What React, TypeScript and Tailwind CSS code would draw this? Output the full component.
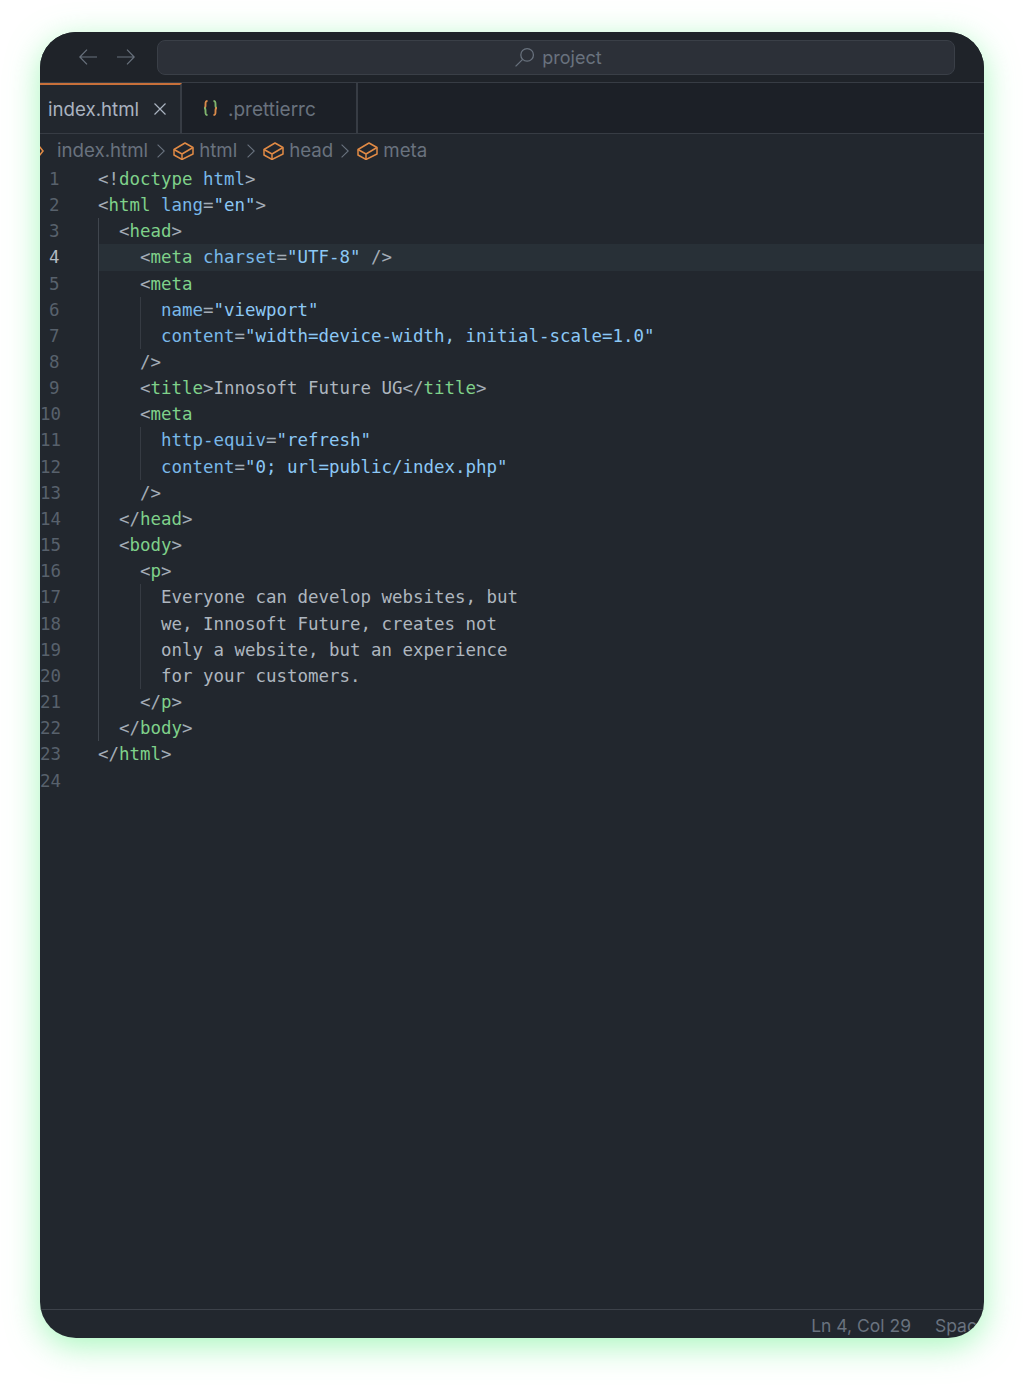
type Seg = [string, string?];

const green = "text-[#7fd18a]";
const blue = "text-[#79b8e8]";
const str = "text-[#8cc8f5]";
const punct = "text-[#a3acb6]";
const plain = "text-[#aeb6bf]";

// g: indent guides shown on the line, in columns from the start of the code
const lines: { segs: Seg[]; indent: number; g?: number[] }[] = [
  { indent: 0, segs: [["<!", punct], ["doctype", green], [" "], ["html", blue], [">", punct]] },
  { indent: 0, segs: [["<", punct], ["html", green], [" "], ["lang", blue], ["=", punct], ['"en"', str], [">", punct]] },
  { indent: 2, g: [0], segs: [["<", punct], ["head", green], [">", punct]] },
  { indent: 4, g: [0], segs: [["<", punct], ["meta", green], [" "], ["charset", blue], ["=", punct], ['"UTF-8"', str], [" />", punct]] },
  { indent: 4, g: [0], segs: [["<", punct], ["meta", green]] },
  { indent: 6, g: [0, 4], segs: [["name", blue], ["=", punct], ['"viewport"', str]] },
  { indent: 6, g: [0, 4], segs: [["content", blue], ["=", punct], ['"width=device-width, initial-scale=1.0"', str]] },
  { indent: 4, g: [0], segs: [["/>", punct]] },
  { indent: 4, g: [0], segs: [["<", punct], ["title", green], [">", punct], ["Innosoft Future UG", plain], ["</", punct], ["title", green], [">", punct]] },
  { indent: 4, g: [0], segs: [["<", punct], ["meta", green]] },
  { indent: 6, g: [0, 4], segs: [["http-equiv", blue], ["=", punct], ['"refresh"', str]] },
  { indent: 6, g: [0, 4], segs: [["content", blue], ["=", punct], ['"0; url=public/index.php"', str]] },
  { indent: 4, g: [0], segs: [["/>", punct]] },
  { indent: 2, g: [0], segs: [["</", punct], ["head", green], [">", punct]] },
  { indent: 2, g: [0], segs: [["<", punct], ["body", green], [">", punct]] },
  { indent: 4, g: [0], segs: [["<", punct], ["p", green], [">", punct]] },
  { indent: 6, g: [0, 4], segs: [["Everyone can develop websites, but", plain]] },
  { indent: 6, g: [0, 4], segs: [["we, Innosoft Future, creates not", plain]] },
  { indent: 6, g: [0, 4], segs: [["only a website, but an experience", plain]] },
  { indent: 6, g: [0, 4], segs: [["for your customers.", plain]] },
  { indent: 4, g: [0], segs: [["</", punct], ["p", green], [">", punct]] },
  { indent: 2, g: [0], segs: [["</", punct], ["body", green], [">", punct]] },
  { indent: 0, segs: [["</", punct], ["html", green], [">", punct]] },
  { indent: 0, segs: [] },
];

function Chevron() {
  return (
    <svg viewBox="0 0 8 14" className="h-[14px] w-[8px] text-[#69727e]" fill="none" stroke="currentColor" strokeWidth="1.1">
      <path d="M.6.6 7.2 7 .6 13.400" />
    </svg>
  );
}

function BoxIcon() {
  return (
    <svg viewBox="0 0 21 18" className="h-[18px] w-[21px] text-[#e08a45]" fill="none" stroke="currentColor" strokeWidth="1.5" strokeLinejoin="round">
      <path d="M1 7.500 12 1l8 4.500v6.500L9 17.500 1 13z" />
      <path d="M1 7.500 9 12l11-6.500M9 12v5.500" />
    </svg>
  );
}

function Crumb({ label, className }: { label: string; className?: string }) {
  return (
    <div className={`flex items-center ${className ?? ""}`}>
      <Chevron />
      <span className="ml-[8px]">
        <BoxIcon />
      </span>
      <span className="ml-[5px]">{label}</span>
    </div>
  );
}

export default function App() {
  return (
    <div className="h-[1385px] w-[1023px] bg-white pl-[40px] pt-[32px] font-['Inter',sans-serif]">
      <div className="flex h-[1306px] w-[944px] flex-col overflow-hidden rounded-[36px] bg-[#22272e] shadow-[0_8px_32px_rgba(97,240,135,0.55)]">
        {/* title bar */}
        <div className="flex h-[51px] shrink-0 items-center border-b border-[#373c44] bg-[#1f2329] pl-[39px] pr-[29px]">
          <svg viewBox="0 0 18 16" className="h-[16px] w-[18px] text-[#69727e]" fill="none" stroke="currentColor" strokeWidth="1.2">
            <path d="M18 8H.8M8 .6.8 8 8 15.400" />
          </svg>
          <svg viewBox="0 0 18 16" className="ml-[20px] h-[16px] w-[18px] text-[#69727e]" fill="none" stroke="currentColor" strokeWidth="1.2">
            <path d="M0 8h17.200M10 .6 17.200 8 10 15.400" />
          </svg>
          <div className="ml-[22px] flex h-[35px] flex-1 items-center justify-center gap-[7px] rounded-[8px] border border-[#3a3f47] bg-[#2c3038] pl-[4px] text-[18px] text-[#69727e]">
            <svg viewBox="0 0 20 20" className="h-[21px] w-[21px]" fill="none" stroke="currentColor" strokeWidth="1.2">
              <circle cx="12.500" cy="7.500" r="6" />
              <path d="M8 12 1.500 18.500" />
            </svg>
            project
          </div>
        </div>

        {/* tabs */}
        <div className="flex h-[51px] shrink-0 border-b border-[#373c44] bg-[#1c2027] text-[18.7px]">
          <div className="flex w-[142px] items-center border-r-2 border-t-2 border-r-[#373c44] border-t-[#c8703a] bg-[#22272e] pl-[8px] pt-[2px] text-[#aab3c0]">
            index.html
            <svg viewBox="0 0 12 12" className="ml-[15px] mt-[-3px] h-[12px] w-[12px]" fill="none" stroke="currentColor" strokeWidth="1.2">
              <path d="M.5.5l11 11M11.500.5l-11 11" />
            </svg>
          </div>
          <div className="flex w-[176px] items-center border-r-2 border-[#373c44] pl-[21px] pt-[4px] text-[19px] text-[#69727e]">
            <svg viewBox="0 0 15 16" className="mt-[-4px] h-[16px] w-[15px]" fill="none" strokeWidth="1.9">
              <path d="M4.500 1C2.500 1 2.500 2 2.500 4v1.500C2.500 7 2 8 1 8" stroke="#d98a4a" />
              <path d="M1 8c1 0 1.500 1 1.500 2.500V12c0 2 0 3 2 3" stroke="#7fb56e" />
              <path d="M10.500 1c2 0 2 1 2 3v1.500C12.500 7 13 8 14 8" stroke="#7fb56e" />
              <path d="M14 8c-1 0-1.500 1-1.500 2.500V12c0 2 0 3-2 3" stroke="#d98a4a" />
            </svg>
            <span className="ml-[10px]">.prettierrc</span>
          </div>
        </div>

        {/* breadcrumb */}
        <div className="flex h-[32px] shrink-0 items-center gap-[8px] pt-[2px] text-[18.7px] text-[#69727e]">
          <svg viewBox="0 0 6 12" className="ml-[-2px] h-[12px] w-[6px] text-[#e08a45]" fill="none" stroke="currentColor" strokeWidth="1.6">
            <path d="M1 1l4 5-4 5" />
          </svg>
          <span className="ml-[5px]">index.html</span>
          <Crumb label="html" className="ml-[1px]" />
          <Crumb label="head" className="ml-[2px]" />
          <Crumb label="meta" />
        </div>

        {/* code */}
        <div className="mt-[-0.1px] flex-1 font-['DejaVu_Sans_Mono',monospace] text-[17.45px] leading-[26.17px]">
          {lines.map((l, i) => (
            <div key={i} className="flex h-[26.17px] whitespace-pre">
              <span className={`w-[19.500px] shrink-0 text-right ${i === 3 ? "text-[#b4bac2]" : "text-[#58616c]"}`}>{i + 1}</span>
              <span className={`relative ml-[38.500px] flex-1 ${i === 3 ? "bg-[#283037]" : ""}`}>
                {l.g?.includes(0) && <span className="absolute inset-y-0 left-0 w-px bg-[#40464e]" />}
                {l.g?.includes(4) && <span className="absolute inset-y-0 left-[42px] w-px bg-[#363b43]" />}
                {" ".repeat(l.indent)}
                {l.segs.map((s, j) => (
                  <span key={j} className={s[1]}>{s[0]}</span>
                ))}
              </span>
            </div>
          ))}
        </div>

        {/* status */}
        <div className="flex h-[29px] shrink-0 items-center justify-end gap-[24px] border-t border-[#3d424a] pt-[5px] text-[17.5px] text-[#69727e]">
          <span>Ln 4, Col 29</span>
          <span className="w-[49px] overflow-hidden whitespace-nowrap">Spaces: 2</span>
        </div>
      </div>
    </div>
  );
}
